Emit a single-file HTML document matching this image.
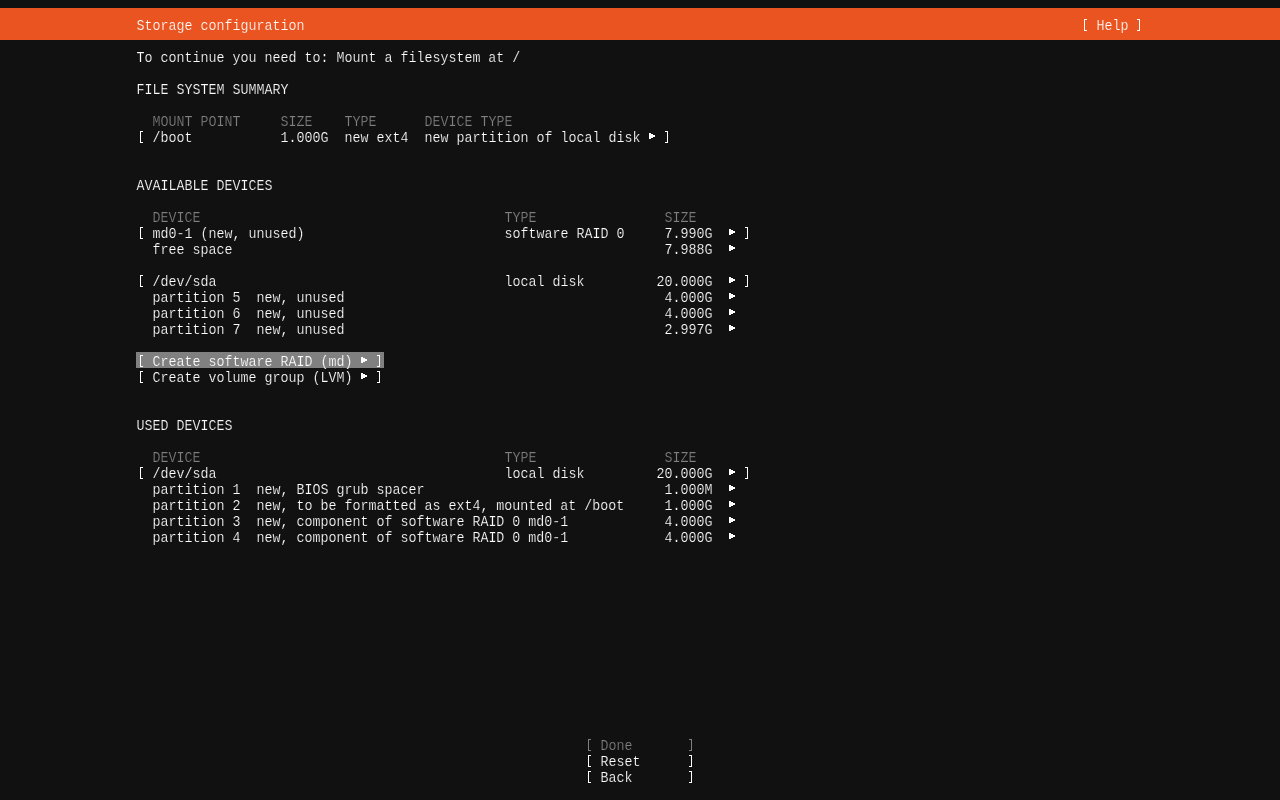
<!DOCTYPE html>
<html><head><meta charset="utf-8"><title>Storage configuration</title>
<style>
html,body{margin:0;padding:0;background:#111111;}
body{width:1280px;height:800px;overflow:hidden;position:relative;font-family:"Liberation Mono",monospace;}
#bar{position:absolute;left:0;top:8px;width:1280px;height:32px;background:#e95420;}
#txt{position:absolute;left:0;top:0;width:1280px;height:800px;will-change:transform;}
#hl{position:absolute;left:136px;top:352px;width:248px;height:16px;background:#808080;}
.t{position:absolute;-webkit-text-stroke:0.2px #111111;height:16px;line-height:14.0474px;font-size:13.333px;letter-spacing:-0.0011px;white-space:pre;color:#ffffff;
   transform-origin:0 0;transform:translate(0.5px,3.0px) scaleY(1.139);}
.g{color:#808080;}
.o{-webkit-text-stroke-color:#e95420;}
.h{-webkit-text-stroke-color:#808080;}
i{position:absolute;display:block;box-sizing:border-box;color:#ffffff;}
i.g{color:#808080;}
.a{width:6px;height:6px;background:currentColor;clip-path:polygon(0 0,2px 0,2px 1px,4px 1px,4px 2px,6px 2px,6px 4px,4px 4px,4px 5px,2px 5px,2px 6px,0 6px);}
.bl{width:3px;height:12px;border:1px solid currentColor;border-right:0;}
.br{width:3px;height:12px;border:1px solid currentColor;border-left:0;}
</style></head><body>
<div id="bar"></div>
<div id="hl"></div>
<div id="txt">
<div class="t o" style="left:136px;top:16px">Storage configuration</div>
<div class="t o" style="left:1096px;top:16px">Help</div>
<div class="t" style="left:136px;top:48px">To continue you need to: Mount a filesystem at /</div>
<div class="t" style="left:136px;top:80px">FILE SYSTEM SUMMARY</div>
<div class="t g" style="left:152px;top:112px">MOUNT POINT</div>
<div class="t g" style="left:280px;top:112px">SIZE</div>
<div class="t g" style="left:344px;top:112px">TYPE</div>
<div class="t g" style="left:424px;top:112px">DEVICE TYPE</div>
<div class="t" style="left:152px;top:128px">/boot</div>
<div class="t" style="left:280px;top:128px">1.000G</div>
<div class="t" style="left:344px;top:128px">new ext4</div>
<div class="t" style="left:424px;top:128px">new partition of local disk</div>
<div class="t" style="left:136px;top:176px">AVAILABLE DEVICES</div>
<div class="t g" style="left:152px;top:208px">DEVICE</div>
<div class="t g" style="left:504px;top:208px">TYPE</div>
<div class="t g" style="left:664px;top:208px">SIZE</div>
<div class="t" style="left:152px;top:224px">md0-1 (new, unused)</div>
<div class="t" style="left:504px;top:224px">software RAID 0</div>
<div class="t" style="left:664px;top:224px">7.990G</div>
<div class="t" style="left:152px;top:240px">free space</div>
<div class="t" style="left:664px;top:240px">7.988G</div>
<div class="t" style="left:152px;top:272px">/dev/sda</div>
<div class="t" style="left:504px;top:272px">local disk</div>
<div class="t" style="left:656px;top:272px">20.000G</div>
<div class="t" style="left:152px;top:288px">partition 5  new, unused</div>
<div class="t" style="left:664px;top:288px">4.000G</div>
<div class="t" style="left:152px;top:304px">partition 6  new, unused</div>
<div class="t" style="left:664px;top:304px">4.000G</div>
<div class="t" style="left:152px;top:320px">partition 7  new, unused</div>
<div class="t" style="left:664px;top:320px">2.997G</div>
<div class="t h" style="left:152px;top:352px">Create software RAID (md)</div>
<div class="t" style="left:152px;top:368px">Create volume group (LVM)</div>
<div class="t" style="left:136px;top:416px">USED DEVICES</div>
<div class="t g" style="left:152px;top:448px">DEVICE</div>
<div class="t g" style="left:504px;top:448px">TYPE</div>
<div class="t g" style="left:664px;top:448px">SIZE</div>
<div class="t" style="left:152px;top:464px">/dev/sda</div>
<div class="t" style="left:504px;top:464px">local disk</div>
<div class="t" style="left:656px;top:464px">20.000G</div>
<div class="t" style="left:152px;top:480px">partition 1  new, BIOS grub spacer</div>
<div class="t" style="left:664px;top:480px">1.000M</div>
<div class="t" style="left:152px;top:496px">partition 2  new, to be formatted as ext4, mounted at /boot</div>
<div class="t" style="left:664px;top:496px">1.000G</div>
<div class="t" style="left:152px;top:512px">partition 3  new, component of software RAID 0 md0-1</div>
<div class="t" style="left:664px;top:512px">4.000G</div>
<div class="t" style="left:152px;top:528px">partition 4  new, component of software RAID 0 md0-1</div>
<div class="t" style="left:664px;top:528px">4.000G</div>
<div class="t g" style="left:600px;top:736px">Done</div>
<div class="t" style="left:600px;top:752px">Reset</div>
<div class="t" style="left:600px;top:768px">Back</div>
</div>
<i class="bl" style="left:1084px;top:19px"></i>
<i class="br" style="left:1137px;top:19px"></i>
<i class="bl" style="left:140px;top:131px"></i>
<i class="a" style="left:649px;top:133px"></i>
<i class="br" style="left:665px;top:131px"></i>
<i class="bl" style="left:140px;top:227px"></i>
<i class="a" style="left:729px;top:229px"></i>
<i class="br" style="left:745px;top:227px"></i>
<i class="a" style="left:729px;top:245px"></i>
<i class="bl" style="left:140px;top:275px"></i>
<i class="a" style="left:729px;top:277px"></i>
<i class="br" style="left:745px;top:275px"></i>
<i class="a" style="left:729px;top:293px"></i>
<i class="a" style="left:729px;top:309px"></i>
<i class="a" style="left:729px;top:325px"></i>
<i class="bl" style="left:140px;top:355px"></i>
<i class="a" style="left:361px;top:357px"></i>
<i class="br" style="left:377px;top:355px"></i>
<i class="bl" style="left:140px;top:371px"></i>
<i class="a" style="left:361px;top:373px"></i>
<i class="br" style="left:377px;top:371px"></i>
<i class="bl" style="left:140px;top:467px"></i>
<i class="a" style="left:729px;top:469px"></i>
<i class="br" style="left:745px;top:467px"></i>
<i class="a" style="left:729px;top:485px"></i>
<i class="a" style="left:729px;top:501px"></i>
<i class="a" style="left:729px;top:517px"></i>
<i class="a" style="left:729px;top:533px"></i>
<i class="bl g" style="left:588px;top:739px"></i>
<i class="br g" style="left:689px;top:739px"></i>
<i class="bl" style="left:588px;top:755px"></i>
<i class="br" style="left:689px;top:755px"></i>
<i class="bl" style="left:588px;top:771px"></i>
<i class="br" style="left:689px;top:771px"></i>
</body></html>
